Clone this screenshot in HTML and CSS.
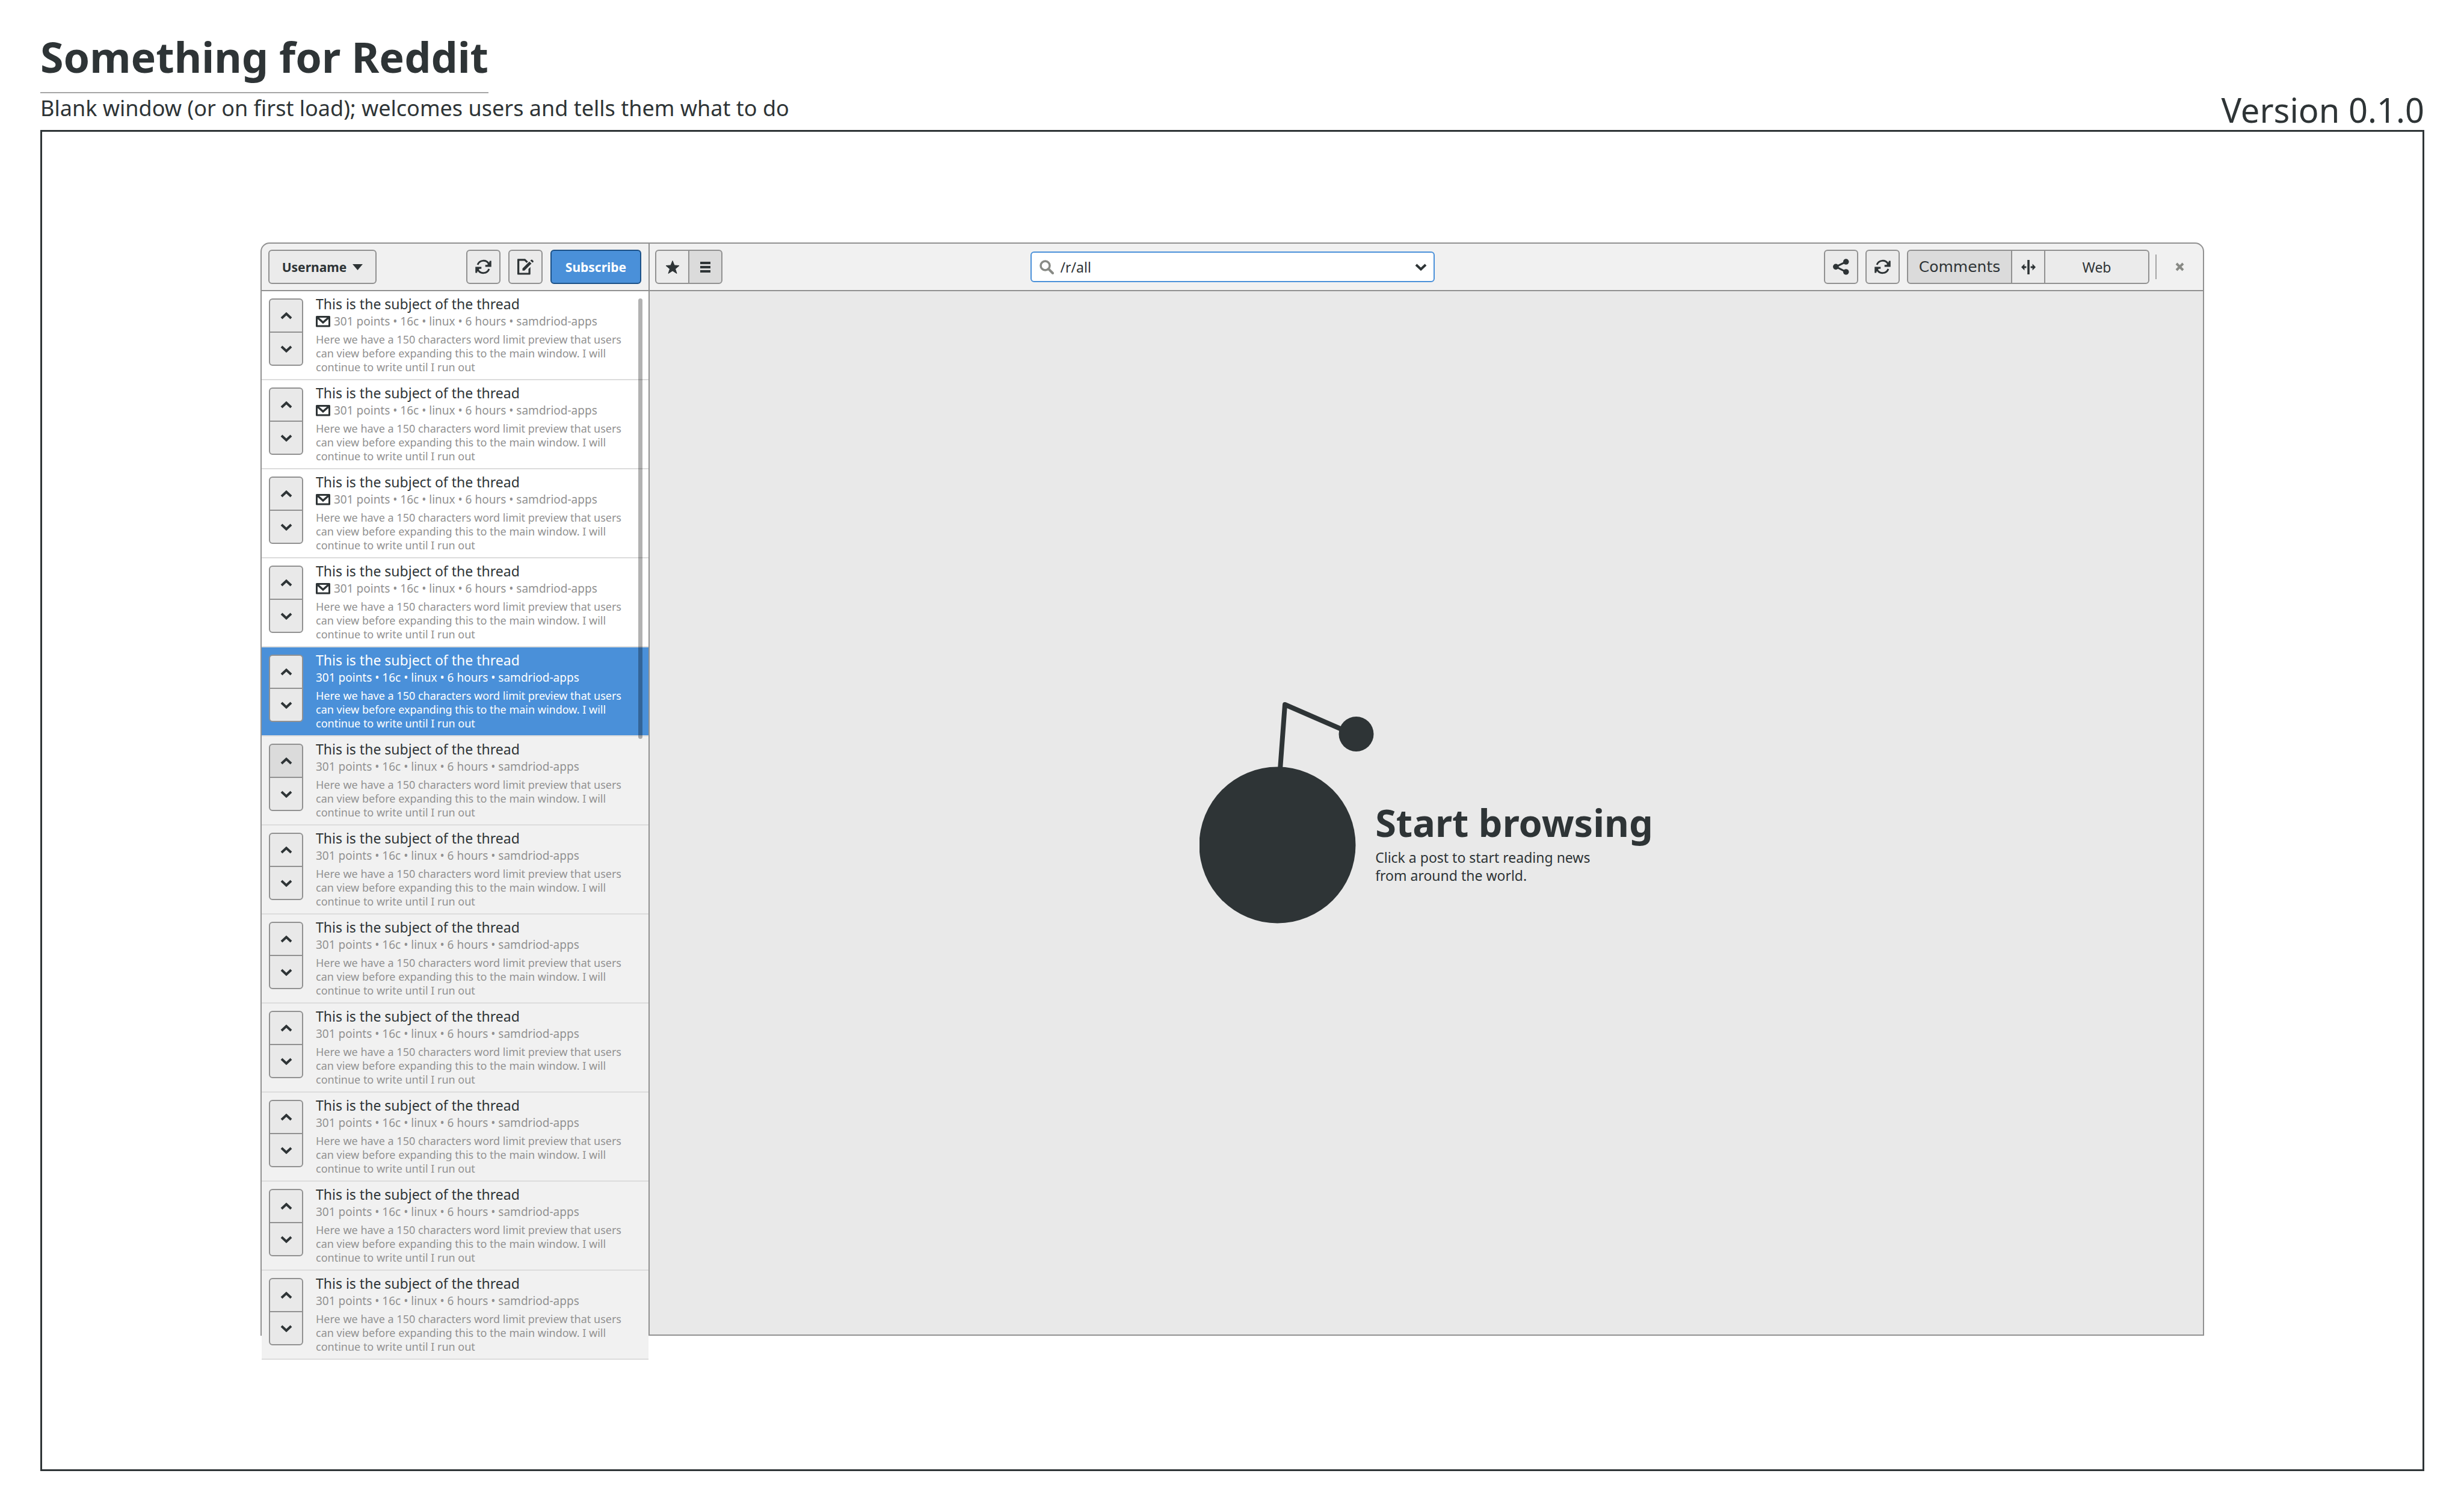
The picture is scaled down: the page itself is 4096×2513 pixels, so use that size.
FILE: index.html
```html
<!DOCTYPE html>
<html lang="en">
<head>
<meta charset="utf-8">
<title>Something for Reddit</title>
<link rel="stylesheet" href="styles.css">
</head>
<body>
<svg class="sprite" aria-hidden="true">
  <symbol id="refresh" viewBox="102 83 108 108">
    <g id="refresh-half">
      <path d="M118 123A41 41 0 0 1 192 117" fill="none" stroke="currentColor" stroke-width="12"/>
      <path d="M209 97h-11l-3 10-13 17h-13v13h40z" fill="currentColor"/>
    </g>
    <use href="#refresh-half" transform="rotate(180 156 137)"/>
  </symbol>
  <symbol id="edit" viewBox="381 83 108 108">
    <path d="M385 84h48l19 18-9 9-15-14h-34v80h61v-26l13-13v46q0 5-5 5h-78q-4 0-4-4v-97q0-4 4-4z" fill="currentColor"/>
    <path d="M415 162v-14l46-46 14 13-47 47zM467 96l5-5q4-4 8-1l7 7q3 4 0 8l-4 4z" fill="currentColor"/>
  </symbol>
  <symbol id="share" viewBox="75 83 107 107">
    <path d="M161 103L94 136l67 34" fill="none" stroke="currentColor" stroke-width="12"/>
    <g fill="currentColor"><circle cx="94" cy="136" r="19"/><circle cx="161" cy="103" r="19"/><circle cx="161" cy="170" r="19"/></g>
  </symbol>
  <symbol id="split" viewBox="0 0 94 94">
    <path d="M40 0h14v94H40zM0 47l21-22v16h12v12H21v16zM94 47L73 25v16H61v12h12v16z" fill="currentColor"/>
  </symbol>
  <symbol id="star" viewBox="0 0 24 23">
    <path d="M12 1l3 7.500 8 .5-6.500 5.500L19 22l-7-4.500L5 22l2.500-7.500L1 9l8-.5z" fill="currentColor" stroke="currentColor" stroke-linejoin="round"/>
  </symbol>
  <symbol id="list" viewBox="0 0 17 18">
    <path d="M0 0h17v4H0zM0 7h17v4H0zM0 14h17v4H0z" fill="currentColor"/>
  </symbol>
  <symbol id="search" viewBox="0 0 24 24">
    <circle cx="9.500" cy="9.500" r="7.500" fill="none" stroke="currentColor" stroke-width="3.500"/>
    <path d="M15 15l7 7" stroke="currentColor" stroke-width="4" stroke-linecap="round"/>
  </symbol>
  <symbol id="down" viewBox="0 0 20 12">
    <path d="M2 2l8 7.500L18 2" fill="none" stroke="currentColor" stroke-width="4"/>
  </symbol>
  <symbol id="up" viewBox="0 0 20 12">
    <path d="M2 10l8-7.500 8 7.500" fill="none" stroke="currentColor" stroke-width="4"/>
  </symbol>
  <symbol id="mail" viewBox="0 0 24 19">
    <path d="M1.500 1.500h21v15.500h-21z" fill="none" stroke="currentColor" stroke-width="3" stroke-linejoin="round"/>
    <path d="M3 3l9 8 9-8" fill="none" stroke="currentColor" stroke-width="3.500"/>
  </symbol>
  <symbol id="close" viewBox="0 0 15 15">
    <path d="M2 2l11 11M13 2L2 13" stroke="currentColor" stroke-width="4"/>
  </symbol>
</svg>

<header class="page-head">
  <div class="page-intro">
    <h1 class="page-title">Something for Reddit</h1>
    <p class="page-subtitle">Blank window (or on first load); welcomes users and tells them what to do</p>
  </div>
  <p class="version">Version 0.1.0</p>
</header>

<main class="frame">
  <div class="window">
    <div class="headerbar">
      <div class="bar-start">
        <div class="bar-side">
          <button type="button" class="button button-user">Username<svg class="caret" viewBox="0 0 17 10"><path d="M0 0h17L8.500 10z" fill="currentColor"/></svg></button>
          <div class="bar-actions">
            <button type="button" class="button" aria-label="Refresh threads"><svg class="icon"><use href="#refresh"/></svg></button>
            <button type="button" class="button" aria-label="New post"><svg class="icon"><use href="#edit"/></svg></button>
            <button type="button" class="button button-primary">Subscribe</button>
          </div>
        </div>
        <div class="linked">
          <button type="button" class="button" aria-label="Favourites"><svg class="icon-medium"><use href="#star"/></svg></button>
          <button type="button" class="button is-active" aria-label="List"><svg class="icon-list"><use href="#list"/></svg></button>
        </div>
      </div>
      <form class="search">
        <svg class="icon-medium"><use href="#search"/></svg>
        <input class="search-input" type="text" value="/r/all" aria-label="Subreddit">
        <button type="button" class="search-toggle" aria-label="Show subreddits"><svg class="chevron"><use href="#down"/></svg></button>
      </form>
      <div class="bar-end">
        <button type="button" class="button" aria-label="Share"><svg class="icon"><use href="#share"/></svg></button>
        <button type="button" class="button" aria-label="Refresh page"><svg class="icon"><use href="#refresh"/></svg></button>
        <div class="linked">
          <button type="button" class="button button-view button-comments is-active">Comments</button>
          <button type="button" class="button" aria-label="Split view"><svg class="icon-medium"><use href="#split"/></svg></button>
          <button type="button" class="button button-view">Web</button>
        </div>
        <button type="button" class="close" aria-label="Close"><svg class="icon-close"><use href="#close"/></svg></button>
      </div>
    </div>

    <div class="panes">
      <div class="sidebar">
        <ul class="threads">
          <li class="thread is-unread">
            <div class="votes"><button type="button" class="vote" aria-label="Upvote"><svg class="chevron"><use href="#up"/></svg></button><button type="button" class="vote" aria-label="Downvote"><svg class="chevron"><use href="#down"/></svg></button></div>
            <div class="thread-text"><h2 class="thread-title">This is the subject of the thread</h2><p class="meta"><svg class="mail"><use href="#mail"/></svg>301 points • 16c • linux • 6 hours • samdriod-apps</p><p class="preview">Here we have a 150 characters word limit preview that users can view before expanding this to the main window. I will continue to write until I run out</p></div>
          </li>
          <li class="thread is-unread">
            <div class="votes"><button type="button" class="vote" aria-label="Upvote"><svg class="chevron"><use href="#up"/></svg></button><button type="button" class="vote" aria-label="Downvote"><svg class="chevron"><use href="#down"/></svg></button></div>
            <div class="thread-text"><h2 class="thread-title">This is the subject of the thread</h2><p class="meta"><svg class="mail"><use href="#mail"/></svg>301 points • 16c • linux • 6 hours • samdriod-apps</p><p class="preview">Here we have a 150 characters word limit preview that users can view before expanding this to the main window. I will continue to write until I run out</p></div>
          </li>
          <li class="thread is-unread">
            <div class="votes"><button type="button" class="vote" aria-label="Upvote"><svg class="chevron"><use href="#up"/></svg></button><button type="button" class="vote" aria-label="Downvote"><svg class="chevron"><use href="#down"/></svg></button></div>
            <div class="thread-text"><h2 class="thread-title">This is the subject of the thread</h2><p class="meta"><svg class="mail"><use href="#mail"/></svg>301 points • 16c • linux • 6 hours • samdriod-apps</p><p class="preview">Here we have a 150 characters word limit preview that users can view before expanding this to the main window. I will continue to write until I run out</p></div>
          </li>
          <li class="thread is-unread">
            <div class="votes"><button type="button" class="vote" aria-label="Upvote"><svg class="chevron"><use href="#up"/></svg></button><button type="button" class="vote" aria-label="Downvote"><svg class="chevron"><use href="#down"/></svg></button></div>
            <div class="thread-text"><h2 class="thread-title">This is the subject of the thread</h2><p class="meta"><svg class="mail"><use href="#mail"/></svg>301 points • 16c • linux • 6 hours • samdriod-apps</p><p class="preview">Here we have a 150 characters word limit preview that users can view before expanding this to the main window. I will continue to write until I run out</p></div>
          </li>
          <li class="thread is-selected">
            <div class="votes"><button type="button" class="vote" aria-label="Upvote"><svg class="chevron"><use href="#up"/></svg></button><button type="button" class="vote" aria-label="Downvote"><svg class="chevron"><use href="#down"/></svg></button></div>
            <div class="thread-text"><h2 class="thread-title">This is the subject of the thread</h2><p class="meta">301 points • 16c • linux • 6 hours • samdriod-apps</p><p class="preview">Here we have a 150 characters word limit preview that users can view before expanding this to the main window. I will continue to write until I run out</p></div>
          </li>
          <li class="thread">
            <div class="votes"><button type="button" class="vote is-active" aria-label="Upvote"><svg class="chevron"><use href="#up"/></svg></button><button type="button" class="vote" aria-label="Downvote"><svg class="chevron"><use href="#down"/></svg></button></div>
            <div class="thread-text"><h2 class="thread-title">This is the subject of the thread</h2><p class="meta">301 points • 16c • linux • 6 hours • samdriod-apps</p><p class="preview">Here we have a 150 characters word limit preview that users can view before expanding this to the main window. I will continue to write until I run out</p></div>
          </li>
          <li class="thread">
            <div class="votes"><button type="button" class="vote" aria-label="Upvote"><svg class="chevron"><use href="#up"/></svg></button><button type="button" class="vote" aria-label="Downvote"><svg class="chevron"><use href="#down"/></svg></button></div>
            <div class="thread-text"><h2 class="thread-title">This is the subject of the thread</h2><p class="meta">301 points • 16c • linux • 6 hours • samdriod-apps</p><p class="preview">Here we have a 150 characters word limit preview that users can view before expanding this to the main window. I will continue to write until I run out</p></div>
          </li>
          <li class="thread">
            <div class="votes"><button type="button" class="vote" aria-label="Upvote"><svg class="chevron"><use href="#up"/></svg></button><button type="button" class="vote" aria-label="Downvote"><svg class="chevron"><use href="#down"/></svg></button></div>
            <div class="thread-text"><h2 class="thread-title">This is the subject of the thread</h2><p class="meta">301 points • 16c • linux • 6 hours • samdriod-apps</p><p class="preview">Here we have a 150 characters word limit preview that users can view before expanding this to the main window. I will continue to write until I run out</p></div>
          </li>
          <li class="thread">
            <div class="votes"><button type="button" class="vote" aria-label="Upvote"><svg class="chevron"><use href="#up"/></svg></button><button type="button" class="vote" aria-label="Downvote"><svg class="chevron"><use href="#down"/></svg></button></div>
            <div class="thread-text"><h2 class="thread-title">This is the subject of the thread</h2><p class="meta">301 points • 16c • linux • 6 hours • samdriod-apps</p><p class="preview">Here we have a 150 characters word limit preview that users can view before expanding this to the main window. I will continue to write until I run out</p></div>
          </li>
          <li class="thread">
            <div class="votes"><button type="button" class="vote" aria-label="Upvote"><svg class="chevron"><use href="#up"/></svg></button><button type="button" class="vote" aria-label="Downvote"><svg class="chevron"><use href="#down"/></svg></button></div>
            <div class="thread-text"><h2 class="thread-title">This is the subject of the thread</h2><p class="meta">301 points • 16c • linux • 6 hours • samdriod-apps</p><p class="preview">Here we have a 150 characters word limit preview that users can view before expanding this to the main window. I will continue to write until I run out</p></div>
          </li>
          <li class="thread">
            <div class="votes"><button type="button" class="vote" aria-label="Upvote"><svg class="chevron"><use href="#up"/></svg></button><button type="button" class="vote" aria-label="Downvote"><svg class="chevron"><use href="#down"/></svg></button></div>
            <div class="thread-text"><h2 class="thread-title">This is the subject of the thread</h2><p class="meta">301 points • 16c • linux • 6 hours • samdriod-apps</p><p class="preview">Here we have a 150 characters word limit preview that users can view before expanding this to the main window. I will continue to write until I run out</p></div>
          </li>
          <li class="thread">
            <div class="votes"><button type="button" class="vote" aria-label="Upvote"><svg class="chevron"><use href="#up"/></svg></button><button type="button" class="vote" aria-label="Downvote"><svg class="chevron"><use href="#down"/></svg></button></div>
            <div class="thread-text"><h2 class="thread-title">This is the subject of the thread</h2><p class="meta">301 points • 16c • linux • 6 hours • samdriod-apps</p><p class="preview">Here we have a 150 characters word limit preview that users can view before expanding this to the main window. I will continue to write until I run out</p></div>
          </li>
        </ul>
        <div class="scrollbar"></div>
      </div>

      <section class="content">
        <div class="welcome">
          <svg class="logo" viewBox="0 0 290 368" aria-hidden="true">
            <path d="M134 112l8-108 108 47" fill="none" stroke="#2e3436" stroke-width="8" stroke-linejoin="round"/>
            <circle cx="129.500" cy="237.500" r="130" fill="#2e3436"/>
            <circle cx="260.500" cy="53" r="29" fill="#2e3436"/>
          </svg>
          <div class="welcome-text">
            <h2 class="welcome-title">Start browsing</h2>
            <p class="welcome-hint">Click a post to start reading news<br>from around the world.</p>
          </div>
        </div>
      </section>
    </div>
  </div>
</main>
</body>
</html>
```
FILE: styles.css
```css
* { box-sizing: border-box; }

body {
  margin: 0;
  min-height: 100vh;
  padding: 46px 66px 68px 67px;
  display: flex;
  flex-direction: column;
  background: #fff;
  color: #2e3436;
  font-family: "Noto Sans", "Open Sans", sans-serif;
}

h1, h2, p, ul { margin: 0; padding: 0; }
ul { list-style: none; }
svg { display: block; flex: none; }
button, input { font: inherit; color: inherit; }

.sprite { position: absolute; width: 0; height: 0; }

/* Page heading */
.page-head {
  display: flex;
  justify-content: space-between;
  align-items: flex-end;
  padding-bottom: 4px;
}
.page-intro {
  display: flex;
  flex-direction: column;
  align-items: flex-start;
  padding-bottom: 7px;
}
.page-title {
  padding-bottom: 11px;
  border-bottom: 2px solid #a5a5a5;
  font-size: 70px;
  line-height: 96px;
  font-weight: 700;
}
.page-subtitle { font-size: 36px; line-height: 50px; }
.version { font-size: 56px; line-height: 60px; }

/* Application window */
.frame {
  flex: 1;
  padding: 184px 363px 222px;
  border: 3px solid #2e3436;
}
.window {
  border: 2px solid #919191;
  border-radius: 15px 15px 0 0;
  background: #f1f1f1;
}

/* Header bar */
.headerbar {
  display: flex;
  align-items: center;
  height: 79px;
  border-bottom: 2px solid #919191;
}
.bar-start, .bar-end {
  flex: 1;
  display: flex;
  align-items: center;
  align-self: stretch;
}
.bar-end { justify-content: flex-end; gap: 12px; }
.bar-side {
  display: flex;
  justify-content: space-between;
  align-items: center;
  align-self: stretch;
  width: 645px;
  margin-right: 9px;
  padding: 0 12px 0 11px;
  border-right: 2px solid #919191;
}
.bar-actions { display: flex; gap: 13px; }
.button {
  display: flex;
  justify-content: center;
  align-items: center;
  width: 57px;
  height: 57px;
  padding: 0;
  border: 2px solid #919191;
  border-radius: 6px;
  background: #ebebeb;
  font-size: 21px;
  font-weight: 700;
}
.button.is-active, .vote.is-active { background: #dbdbdb; }
.button-user { width: 180px; gap: 10px; }
.button-primary {
  width: 151px;
  border-color: #1c5187;
  background: #4a90d9;
  color: #fff;
}
.linked { display: flex; }
.linked .button:not(:first-child) {
  margin-left: -2px;
  border-top-left-radius: 0;
  border-bottom-left-radius: 0;
}
.linked .button:not(:last-child) {
  border-top-right-radius: 0;
  border-bottom-right-radius: 0;
}
.button-view { width: 175px; font-size: 23px; font-weight: 400; }
.button-comments { font-family: "DejaVu Sans", sans-serif; font-size: 25px; }
.close {
  display: flex;
  justify-content: center;
  align-items: center;
  width: 79px;
  height: 41px;
  margin-left: -2px;
  padding: 0;
  border: 0;
  border-left: 2px solid #a5a5a5;
  background: none;
  color: #888a85;
}
.icon { width: 27px; height: 27px; }
.icon-medium { width: 24px; height: 24px; }
.icon-list { width: 17px; height: 18px; }
.icon-close { width: 15px; height: 15px; }
.caret { width: 17px; height: 10px; }
.chevron { width: 20px; height: 12px; }

.search {
  display: flex;
  align-items: center;
  width: 672px;
  height: 51px;
  padding: 0 11px 0 13px;
  border: 2px solid #4a90d9;
  border-radius: 6px;
  background: #fff;
}
.search > svg { color: #888a85; }
.search-input {
  flex: 1;
  min-width: 0;
  margin-left: 11px;
  padding: 0;
  border: 0;
  outline: 0;
  background: none;
  font-size: 23px;
}
.search-toggle { padding: 0; border: 0; background: none; }

/* Thread list; the last row runs past the window's lower edge */
.panes { display: flex; }
.sidebar {
  position: relative;
  display: flex;
  flex-direction: column;
  width: 645px;
  border-right: 2px solid #919191;
}
.threads { margin-bottom: -42px; }
.thread {
  display: flex;
  align-items: flex-start;
  gap: 21px;
  height: 148px;
  padding: 6px 12px 0;
  border-bottom: 2px solid #dcdcdc;
  background: #f1f1f1;
}
.thread.is-unread { background: #fff; }
.thread.is-selected { background: #4a90d9; color: #fff; }
.votes {
  display: flex;
  flex-direction: column;
  width: 57px;
  padding-top: 6px;
  color: #2e3436;
}
.vote {
  display: flex;
  justify-content: center;
  align-items: center;
  height: 57px;
  padding: 0;
  border: 2px solid #919191;
  border-radius: 6px 6px 0 0;
  background: #e9e9e9;
}
.vote + .vote { margin-top: -2px; border-radius: 0 0 6px 6px; }
.thread-text { max-width: 520px; }
.thread-title { font-size: 23px; line-height: 30px; font-weight: 400; }
.meta {
  display: flex;
  align-items: center;
  gap: 6px;
  margin-bottom: 5px;
  color: #919191;
  font-size: 19px;
  line-height: 28px;
}
.mail { width: 24px; height: 19px; color: #2e3436; }
.preview { color: #919191; font-size: 18px; line-height: 23px; }
.is-selected .meta, .is-selected .preview { color: #fff; }
.scrollbar {
  position: absolute;
  top: 12px;
  right: 10px;
  width: 7px;
  height: 732px;
  border-radius: 4px;
  background: rgba(0, 0, 0, 0.3);
}

/* Empty content pane */
.content {
  flex: 1;
  display: flex;
  justify-content: center;
  align-items: center;
  background: #e9e9e9;
}
.welcome { display: flex; align-items: flex-end; gap: 2px; }
.logo { width: 290px; height: 368px; }
.welcome-text { padding-bottom: 65px; }
.welcome-title {
  margin-bottom: 11px;
  font-size: 63px;
  line-height: 64px;
  font-weight: 700;
}
.welcome-hint { font-size: 23px; line-height: 30px; }
```
